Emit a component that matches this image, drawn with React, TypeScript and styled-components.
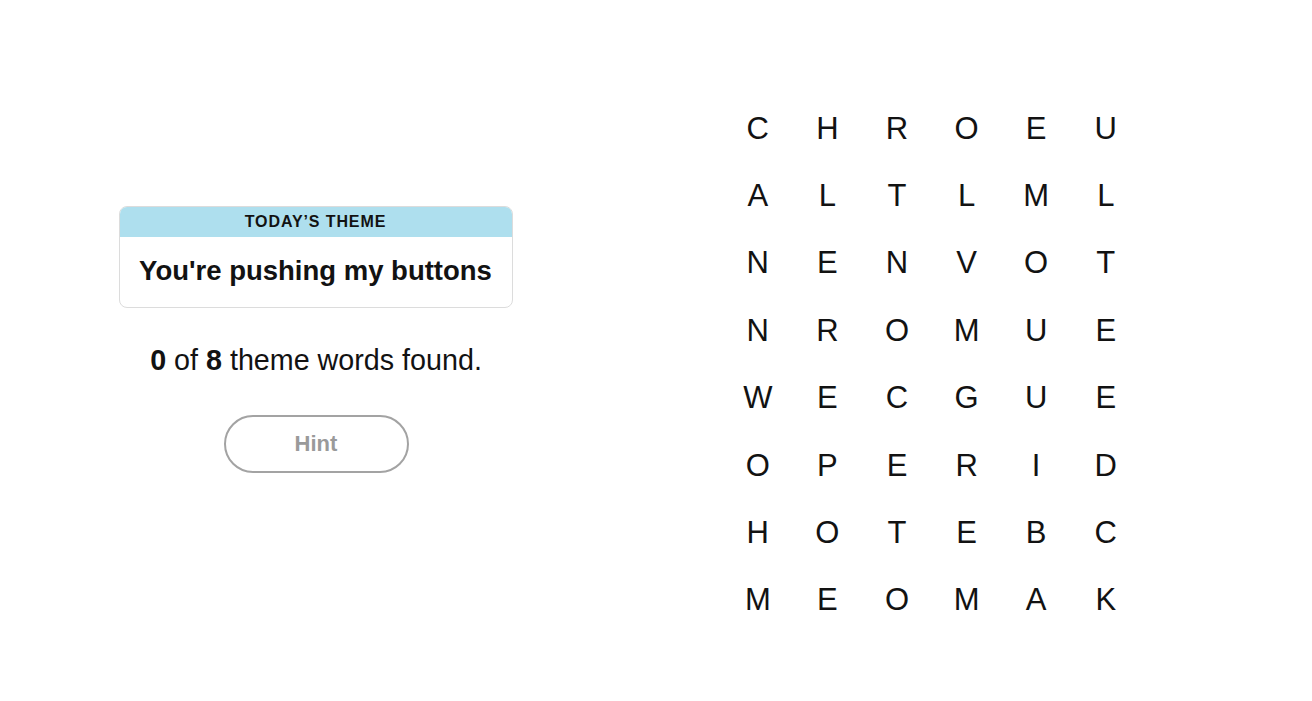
import React from 'react';
import styled, { createGlobalStyle } from 'styled-components';

const GlobalStyle = createGlobalStyle`
  html, body {
    margin: 0;
    padding: 0;
    background: #ffffff;
    font-family: "Liberation Sans", Arial, sans-serif;
    color: #121212;
  }
`;

const Page = styled.div`
  width: 1312px;
  height: 701px;
  display: flex;
  flex-direction: row;
`;

const Side = styled.div`
  width: 632px;
  padding-top: 206px;
  display: flex;
  flex-direction: column;
  align-items: center;
`;

const ThemeCard = styled.div`
  width: 394px;
  margin-left: -1px;
  border: 1px solid #dcdcdc;
  border-radius: 8px;
  overflow: hidden;
  box-sizing: border-box;
`;

const ThemeHeader = styled.div`
  height: 30px;
  background: #aedfee;
  display: flex;
  align-items: center;
  justify-content: center;
  font-size: 16px;
  font-weight: 700;
  letter-spacing: 0.9px;
  text-transform: uppercase;
`;

const ThemeTitle = styled.div`
  height: 70px;
  display: flex;
  align-items: center;
  justify-content: center;
  font-size: 27.5px;
  font-weight: 700;
  padding-bottom: 2px;
  box-sizing: border-box;
`;

const Counter = styled.p`
  margin: 35px 0 0;
  font-size: 28.7px;
  line-height: 34px;
  b {
    font-weight: 700;
  }
`;

const HintButton = styled.button`
  margin-top: 38px;
  width: 185px;
  height: 58px;
  border: 2px solid #a3a3a3;
  border-radius: 30px;
  background: #ffffff;
  color: #9a9a9a;
  font-family: "Liberation Sans", Arial, sans-serif;
  font-size: 22px;
  font-weight: 700;
  cursor: default;
`;

const Board = styled.div`
  margin-left: 91px;
  padding-top: 95px;
  display: grid;
  grid-template-columns: repeat(6, 69.6px);
  grid-auto-rows: 67.4px;
  align-content: start;
`;

const Letter = styled.div`
  display: flex;
  align-items: center;
  justify-content: center;
  font-size: 31px;
  font-weight: 400;
  color: #121212;
`;

const rows = [
  'CHROEU',
  'ALTLML',
  'NENVOT',
  'NROMUE',
  'WECGUE',
  'OPERID',
  'HOTEBC',
  'MEOMAK',
];

export default function App() {
  return (
    <>
      <GlobalStyle />
      <Page>
        <Side>
          <ThemeCard>
            <ThemeHeader>Today’s theme</ThemeHeader>
            <ThemeTitle>You're pushing my buttons</ThemeTitle>
          </ThemeCard>
          <Counter>
            <b>0</b> of <b>8</b> theme words found.
          </Counter>
          <HintButton>Hint</HintButton>
        </Side>
        <Board>
          {rows.map((row, r) =>
            row.split('').map((ch, c) => <Letter key={`${r}-${c}`}>{ch}</Letter>)
          )}
        </Board>
      </Page>
    </>
  );
}
